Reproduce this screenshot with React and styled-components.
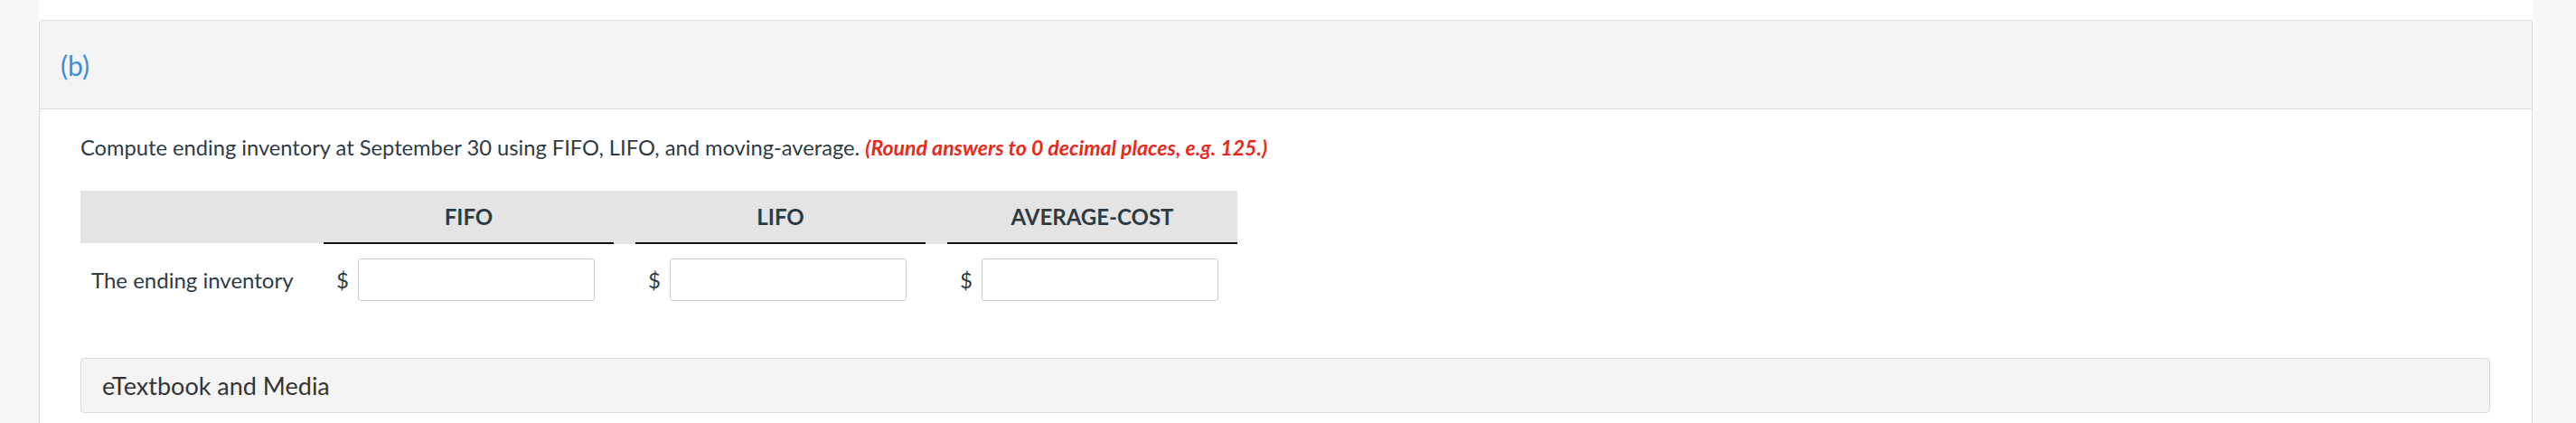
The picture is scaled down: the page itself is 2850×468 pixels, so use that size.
import React from "react";
import styled, { createGlobalStyle } from "styled-components";

const GlobalStyle = createGlobalStyle`
  html, body {
    margin: 0;
    padding: 0;
    background: #f8f8f8;
    font-family: Lato, "Open Sans", "Liberation Sans", sans-serif;
    color: #2d3b45;
  }
`;

const Page = styled.div`
  margin: 0 48px 0 43px;
  min-height: 100vh;
  background: #ffffff;
  padding-top: 22px;
  box-sizing: border-box;
`;

const Card = styled.section`
  border: 1px solid #dcdcdc;
  border-bottom: none;
  border-radius: 4px 4px 0 0;
  min-height: 460px;
`;

const CardHeader = styled.header`
  display: flex;
  align-items: center;
  height: 97px;
  padding-left: 23px;
  background: #f4f4f4;
  border-bottom: 1px solid #dcdcdc;
  border-radius: 4px 4px 0 0;
`;

const PartLabel = styled.span`
  font-size: 30px;
  color: #3a8fdc;
`;

const CardBody = styled.div`
  padding: 27px 46px 0 45px;
`;

const Prompt = styled.p`
  margin: 0;
  font-size: 23.7px;
  line-height: 30px;
`;

const Hint = styled.em`
  color: #e8291c;
  font-weight: 700;
  font-size: 23.1px;
`;

const Grid = styled.div`
  display: grid;
  grid-template-columns: 245px repeat(3, 321px);
  column-gap: 24px;
  width: 1279px;
  margin-top: 33px;
`;

const HeadRow = styled.div`
  display: contents;
`;

const HeadCell = styled.div`
  display: flex;
  align-items: center;
  justify-content: center;
  height: ${(p) => (p.$blank ? "58px" : "57px")};
  background: #e4e4e4;
  border-bottom: ${(p) => (p.$blank ? "none" : "2px solid #111")};
  font-size: 24px;
  font-weight: 700;
  box-shadow: ${(p) => (p.$last ? "none" : "24px 0 0 #e4e4e4")};
`;

const RowLabel = styled.div`
  display: flex;
  align-items: center;
  padding-left: 12px;
  margin-top: 16px;
  font-size: 24px;
`;

const ValueCell = styled.label`
  display: flex;
  align-items: center;
  gap: 10px;
  padding-left: 14px;
  margin-top: 16px;
  font-size: 24px;
`;

const AmountInput = styled.input`
  width: 262px;
  height: 47px;
  box-sizing: border-box;
  border: 1px solid #c7cdd1;
  border-radius: 3px;
  background: #fff;
  font: inherit;
  padding: 0 10px;
`;

const MediaBox = styled.div`
  display: flex;
  align-items: center;
  height: 61px;
  margin-top: 63px;
  padding-left: 23px;
  box-sizing: border-box;
  background: #f4f4f4;
  border: 1px solid #dcdcdc;
  border-radius: 4px;
  font-size: 27px;
  color: #333;
`;

const columns = ["FIFO", "LIFO", "AVERAGE-COST"];

export default function App() {
  return (
    <>
      <GlobalStyle />
      <Page>
        <Card>
          <CardHeader>
            <PartLabel>(b)</PartLabel>
          </CardHeader>
          <CardBody>
            <Prompt>
              Compute ending inventory at September 30 using FIFO, LIFO, and
              moving-average.{" "}
              <Hint>(Round answers to 0 decimal places, e.g. 125.)</Hint>
            </Prompt>
            <Grid>
              <HeadRow>
                <HeadCell $blank />
                {columns.map((c, i) => (
                  <HeadCell key={c} $last={i === columns.length - 1}>
                    {c}
                  </HeadCell>
                ))}
              </HeadRow>
              <RowLabel>The ending inventory</RowLabel>
              {columns.map((c) => (
                <ValueCell key={c}>
                  $
                  <AmountInput type="text" aria-label={c} />
                </ValueCell>
              ))}
            </Grid>
            <MediaBox>eTextbook and Media</MediaBox>
          </CardBody>
        </Card>
      </Page>
    </>
  );
}
